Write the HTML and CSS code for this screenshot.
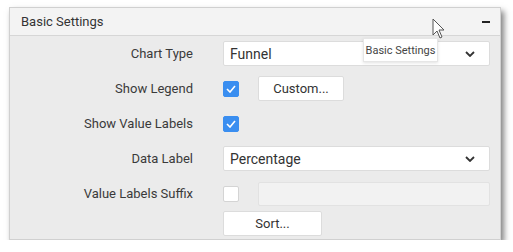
FILE: index.html
```html
<!DOCTYPE html>
<html lang="en">
<head>
  <meta charset="UTF-8">
  <title>Basic Settings</title>
  <link rel="stylesheet" href="styles.css">
</head>
<body>
  <div class="panel">
    <div class="panel-header">
      <span class="panel-title">Basic Settings</span>
      <span class="collapse"></span>
    </div>

    <div class="panel-body">
      <div class="row">
        <label class="label">Chart Type</label>
        <div class="select">
          <span>Funnel</span>
          <svg class="chevron" width="10" height="6" viewBox="0 0 10 6"><path d="M1 1l4 4 4-4" fill="none" stroke="#333" stroke-width="1.8"/></svg>
        </div>
      </div>

      <div class="row">
        <label class="label">Show Legend</label>
        <div class="controls">
          <span class="check checked"><svg width="10" height="8" viewBox="0 0 10 8"><path d="M1 4l3 3 5-6" fill="none" stroke="#fff" stroke-width="1.6"/></svg></span>
          <button class="btn btn-custom">Custom...</button>
        </div>
      </div>

      <div class="row">
        <label class="label">Show Value Labels</label>
        <div class="controls">
          <span class="check checked"><svg width="10" height="8" viewBox="0 0 10 8"><path d="M1 4l3 3 5-6" fill="none" stroke="#fff" stroke-width="1.6"/></svg></span>
        </div>
      </div>

      <div class="row">
        <label class="label">Data Label</label>
        <div class="select">
          <span>Percentage</span>
          <svg class="chevron" width="10" height="6" viewBox="0 0 10 6"><path d="M1 1l4 4 4-4" fill="none" stroke="#333" stroke-width="1.8"/></svg>
        </div>
      </div>

      <div class="row row-tight">
        <label class="label">Value Labels Suffix</label>
        <div class="controls">
          <span class="check"></span>
          <div class="textbox"></div>
        </div>
      </div>

      <div class="row">
        <span class="label"></span>
        <div class="controls">
          <button class="btn btn-sort">Sort...</button>
        </div>
      </div>
    </div>
  </div>

  <div class="tooltip">Basic Settings</div>

  <svg class="cursor" width="13" height="21" viewBox="0 0 13 21">
    <path d="M1 1v16l4-4 3 7 2-1-3-7h5z" fill="#fff" stroke="#555" stroke-width="1" stroke-linejoin="round"/>
  </svg>
</body>
</html>
```

FILE: styles.css
```css
:root {
  --text: #333;
  --border: #dcdcdc;
  --blue: #3a8ef0;
  --header-bg: #f3f3f3;
  --body-bg: #ebebeb;
}

body {
  margin: 0;
  background: #fff;
  font-family: Roboto, 'Noto Sans', sans-serif;
  color: var(--text);
}

.panel {
  width: 490px;
  margin: 7px 0 0 9px;
  border: 1px solid #d0d0d0;
  background: var(--body-bg);
  box-shadow: 3px 4px 6px rgba(0,0,0,0.5);
}

.panel-header {
  height: 27px;
  display: flex;
  align-items: center;
  justify-content: space-between;
  padding: 0 10px 0 11px;
  background: var(--header-bg);
  border-bottom: 1px solid #d6d6d6;
}

.panel-title {
  font-size: 13px;
}

.collapse {
  width: 8px;
  height: 2px;
  background: #222;
}

.panel-body {
  padding: 5px 9px 3px 0;
}

.row {
  display: grid;
  grid-template-columns: 183px 267px;
  column-gap: 30px;
  align-items: center;
  height: 25px;
  margin-bottom: 10px;
}

.row-tight {
  margin-bottom: 5px;
}

.row:last-child {
  margin-bottom: 0;
}

.label {
  text-align: right;
  font-size: 13px;
  color: #3a3a3a;
}

.select {
  height: 23px;
  display: flex;
  align-items: center;
  justify-content: space-between;
  padding: 0 14px 0 6px;
  background: #fff;
  border: 1px solid var(--border);
  border-radius: 2px;
  font-size: 14px;
}

.controls {
  display: flex;
  align-items: center;
  gap: 19px;
  height: 25px;
}

.check {
  width: 16px;
  height: 16px;
  box-sizing: border-box;
  border-radius: 2px;
  background: #fff;
  border: 1px solid #d4d4d4;
  display: flex;
  align-items: center;
  justify-content: center;
}

.check.checked {
  background: var(--blue);
  border-color: var(--blue);
}

.btn {
  height: 25px;
  background: #fff;
  border: 1px solid var(--border);
  border-radius: 2px;
  font-family: inherit;
  font-size: 13px;
  color: var(--text);
  padding: 0;
}

.btn-custom {
  width: 86px;
}

.btn-sort {
  width: 99px;
}

.textbox {
  flex: 1;
  height: 24px;
  box-sizing: border-box;
  background: #f2f2f2;
  border: 1px solid #e2e2e2;
  border-radius: 2px;
}

.tooltip {
  position: absolute;
  left: 363px;
  top: 38px;
  width: 75px;
  height: 24px;
  box-sizing: border-box;
  display: flex;
  align-items: center;
  justify-content: center;
  background: #fff;
  border: 1px solid #e6e6e6;
  box-shadow: 0 1px 3px rgba(0,0,0,0.12);
  font-size: 11px;
  color: #444;
}

.cursor {
  position: absolute;
  left: 432px;
  top: 18px;
}
```
